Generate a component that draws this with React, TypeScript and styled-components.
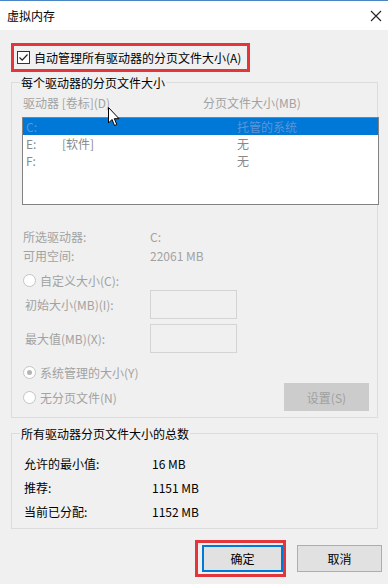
import React from "react";
import styled, { createGlobalStyle } from "styled-components";

const Global = createGlobalStyle`
  html, body { margin: 0; padding: 0; }
  body {
    background: #f0f0f0;
    font-family: "Noto Sans CJK SC", "Noto Sans", sans-serif;
    font-size: 12px;
    color: #000;
    width: 388px;
    height: 584px;
    overflow: hidden;
  }
  * { box-sizing: border-box; }
`;

const Window = styled.div`
  position: relative;
  width: 388px;
  height: 584px;
  background: #f0f0f0;
`;

const TitleBar = styled.div`
  height: 30px;
  background: #fff;
  border-top: 1px solid #4a86c5;
  display: flex;
  align-items: center;
  justify-content: space-between;
  padding: 0 6px 0 7px;
  line-height: 17px;
`;

const Content = styled.div`
  display: flex;
  flex-direction: column;
`;

const Highlight = styled.div`
  margin: 13px 0 0 11px;
  width: 239px;
  height: 29px;
  border: 3px solid #e2353c;
  display: flex;
  align-items: center;
  padding-left: 3px;
  gap: 4px;
  line-height: 17px;
`;

const CheckBox = styled.span`
  width: 13px;
  height: 13px;
  border: 1px solid #333;
  background: #fff;
  display: flex;
  align-items: center;
  justify-content: center;
`;

const Group = styled.fieldset<{ $top: number; $bottom: number }>`
  margin: ${(p) => p.$top}px 0 0 11px;
  width: 367px;
  padding: 0 0 ${(p) => p.$bottom}px 0;
  border: 1px solid #dcdcdc;
  min-width: 0;
`;

const Legend = styled.legend`
  margin-left: 8px;
  padding: 0 1px;
  line-height: 17px;
  color: #000;
`;

const Muted = "#a2a2a2";

const ColHeader = styled.div`
  margin-top: 3px;
  padding-left: 11px;
  display: flex;
  line-height: 17px;
  color: ${Muted};
`;

const HeadCell = styled.span<{ $w?: number }>`
  width: ${(p) => (p.$w ? `${p.$w}px` : "auto")};
  flex: none;
`;

const ListBox = styled.div`
  margin: 6px -2px 0 10px;
  height: 88px;
  border: 1px solid #828282;
  background: #fff;
`;

const ListRow = styled.div<{ $sel?: boolean }>`
  height: 17px;
  line-height: 17px;
  display: flex;
  padding-left: 3px;
  background: ${(p) => (p.$sel ? "#0078d7" : "transparent")};
  color: ${(p) => (p.$sel ? "#5f94d6" : "#8a8a8a")};
`;

const Cell = styled.span<{ $w: number }>`
  width: ${(p) => p.$w}px;
  flex: none;
`;

const InfoGrid = styled.div<{ $top: number; $rowH: number; $color: string; $left: number; $labelW: number }>`
  margin-top: ${(p) => p.$top}px;
  padding-left: ${(p) => p.$left}px;
  display: grid;
  grid-template-columns: ${(p) => p.$labelW}px 1fr;
  grid-auto-rows: ${(p) => p.$rowH}px;
  align-items: center;
  color: ${(p) => p.$color};
  line-height: 17px;
`;

const RadioRow = styled.div<{ $top: number; $h: number }>`
  margin-top: ${(p) => p.$top}px;
  height: ${(p) => p.$h}px;
  padding-left: 11px;
  padding-right: 8px;
  display: flex;
  align-items: center;
  gap: 4px;
  color: ${Muted};
  line-height: 17px;
`;

const Radio = styled.span<{ $on?: boolean }>`
  width: 13px;
  height: 13px;
  border-radius: 50%;
  border: 1px solid #c4c4c4;
  background: #fff;
  display: flex;
  align-items: center;
  justify-content: center;
  flex: none;
  &::after {
    content: "";
    width: 5px;
    height: 5px;
    border-radius: 50%;
    background: ${(p) => (p.$on ? "#b4b4b4" : "transparent")};
  }
`;

const SizeRows = styled.div`
  display: grid;
  grid-template-columns: 125px 87px;
  grid-auto-rows: 29px;
  row-gap: 5px;
  padding-left: 13px;
  align-items: center;
  color: ${Muted};
  line-height: 17px;
`;

const SizeInput = styled.div`
  height: 29px;
  border: 1px solid #d4d4d4;
  background: #f0f0f0;
`;

const SetButton = styled.div`
  margin-left: auto;
  width: 85px;
  height: 28px;
  background: #cccccc;
  color: #a0a0a0;
  display: flex;
  align-items: center;
  justify-content: center;
`;

const Footer = styled.div`
  margin-top: 16px;
  padding-right: 6px;
  display: flex;
  justify-content: flex-end;
  gap: 14px;
`;

const Button = styled.div<{ $primary?: boolean; $w: number }>`
  position: relative;
  width: ${(p) => p.$w}px;
  height: 27px;
  background: #e1e1e1;
  border: ${(p) => (p.$primary ? "2px solid #0078d7" : "1px solid #adadad")};
  display: flex;
  align-items: center;
  justify-content: center;
  line-height: 17px;
`;

const RedMark = styled.span`
  position: absolute;
  left: -9px;
  top: -7px;
  width: 91px;
  height: 37px;
  border: 3px solid #e2353c;
  pointer-events: none;
`;

const Cursor = styled.svg`
  position: absolute;
  left: 108px;
  top: 107px;
`;

export default function App() {
  return (
    <>
      <Global />
      <Window>
        <TitleBar>
          <span>虚拟内存</span>
          <svg width="12" height="12" viewBox="0 0 12 12">
            <path d="M1 1 L11 11 M11 1 L1 11" stroke="#222" strokeWidth="1.1" fill="none" />
          </svg>
        </TitleBar>
        <Content>
          <Highlight>
            <CheckBox>
              <svg width="11" height="11" viewBox="0 0 11 11">
                <path d="M1.5 5.5 L4.2 8.2 L9.5 2.5" stroke="#222" strokeWidth="1.2" fill="none" />
              </svg>
            </CheckBox>
            <span>自动管理所有驱动器的分页文件大小(A)</span>
          </Highlight>

          <Group $top={2} $bottom={6}>
            <Legend>每个驱动器的分页文件大小</Legend>
            <ColHeader>
              <HeadCell $w={180}>驱动器 [卷标](D)</HeadCell>
              <HeadCell>分页文件大小(MB)</HeadCell>
            </ColHeader>
            <ListBox>
              <ListRow $sel>
                <Cell $w={211}>C:</Cell>
                <span>托管的系统</span>
              </ListRow>
              <ListRow>
                <Cell $w={36}>E:</Cell>
                <Cell $w={175}>[软件]</Cell>
                <span>无</span>
              </ListRow>
              <ListRow>
                <Cell $w={211}>F:</Cell>
                <span>无</span>
              </ListRow>
            </ListBox>

            <InfoGrid $top={22} $rowH={19} $color={Muted} $left={11} $labelW={127}>
              <span>所选驱动器:</span>
              <span>C:</span>
              <span>可用空间:</span>
              <span>22061 MB</span>
            </InfoGrid>

            <RadioRow $top={6} $h={19}>
              <Radio />
              <span>自定义大小(C):</span>
            </RadioRow>
            <SizeRows>
              <span>初始大小(MB)(I):</span>
              <SizeInput />
              <span>最大值(MB)(X):</span>
              <SizeInput />
            </SizeRows>
            <RadioRow $top={10} $h={19}>
              <Radio $on />
              <span>系统管理的大小(Y)</span>
            </RadioRow>
            <RadioRow $top={1} $h={28}>
              <Radio />
              <span>无分页文件(N)</span>
              <SetButton>设置(S)</SetButton>
            </RadioRow>
          </Group>

          <Group $top={7} $bottom={5}>
            <Legend>所有驱动器分页文件大小的总数</Legend>
            <InfoGrid $top={9} $rowH={24} $color="#000" $left={12} $labelW={128}>
              <span>允许的最小值:</span>
              <span>16 MB</span>
              <span>推荐:</span>
              <span>1151 MB</span>
              <span>当前已分配:</span>
              <span>1152 MB</span>
            </InfoGrid>
          </Group>

          <Footer>
            <Button $primary $w={81}>
              确定
              <RedMark />
            </Button>
            <Button $w={85}>取消</Button>
          </Footer>
        </Content>
        <Cursor width="12" height="20" viewBox="0 0 12 20">
          <path
            d="M0.5 0.5 L0.5 16 L4 12.5 L6.5 18.5 L8.8 17.5 L6.3 11.7 L11 11.7 Z"
            fill="#fff"
            stroke="#000"
            strokeWidth="1"
            strokeLinejoin="round"
          />
        </Cursor>
      </Window>
    </>
  );
}
